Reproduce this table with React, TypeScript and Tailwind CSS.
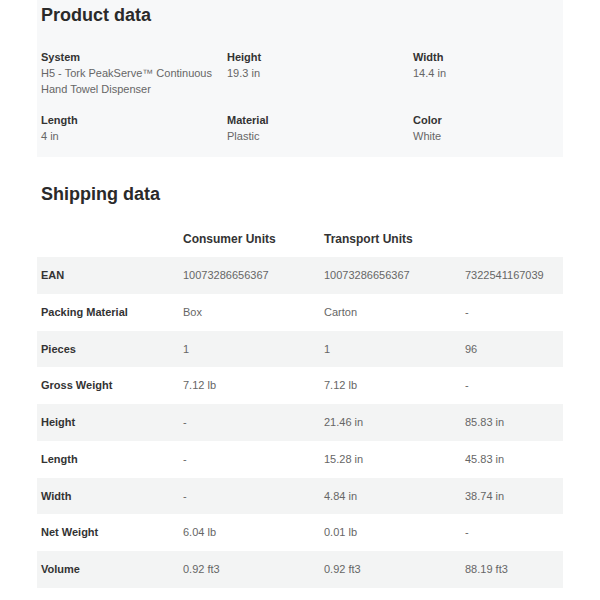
import React from "react";

const product = [
  [
    { label: "System", value: "H5 - Tork PeakServe™ Continuous Hand Towel Dispenser" },
    { label: "Height", value: "19.3 in" },
    { label: "Width", value: "14.4 in" },
  ],
  [
    { label: "Length", value: "4 in" },
    { label: "Material", value: "Plastic" },
    { label: "Color", value: "White" },
  ],
];

const rows: [string, string, string, string][] = [
  ["EAN", "10073286656367", "10073286656367", "7322541167039"],
  ["Packing Material", "Box", "Carton", "-"],
  ["Pieces", "1", "1", "96"],
  ["Gross Weight", "7.12 lb", "7.12 lb", "-"],
  ["Height", "-", "21.46 in", "85.83 in"],
  ["Length", "-", "15.28 in", "45.83 in"],
  ["Width", "-", "4.84 in", "38.74 in"],
  ["Net Weight", "6.04 lb", "0.01 lb", "-"],
  ["Volume", "0.92 ft3", "0.92 ft3", "88.19 ft3"],
];

export default function App() {
  return (
    <div
      className="w-[600px] h-[600px] bg-white overflow-hidden"
      style={{ fontFamily: '"Liberation Sans", Arial, sans-serif' }}
    >
      <div className="mx-[37px] w-[526px]">
        <div className="bg-[#f7f8f9] px-1 pt-[3px] pb-[13px]">
          <h2 className="text-[18px] leading-[24px] font-bold text-[#2a2a2a]">Product data</h2>
          <div className="mt-[22px] flex flex-col gap-[15px]">
            {product.map((r, i) => (
              <div key={i} className="grid grid-cols-[186px_186px_1fr]">
                {r.map((c) => (
                  <div key={c.label}>
                    <div className="text-[11px] leading-[16px] font-bold text-[#333]">{c.label}</div>
                    <div className="text-[11px] leading-[16px] text-[#666] max-w-[178px]">{c.value}</div>
                  </div>
                ))}
              </div>
            ))}
          </div>
        </div>

        <h2 className="mt-[25px] px-1 text-[18px] leading-[24px] font-bold text-[#2a2a2a]">Shipping data</h2>
        <div className="mt-[14px]">
          <div className="grid grid-cols-[142px_141px_141px_1fr] h-[37px] items-center">
            <div />
            <div className="px-1 text-[12px] font-bold text-[#333]">Consumer Units</div>
            <div className="px-1 text-[12px] font-bold text-[#333]">Transport Units</div>
            <div />
          </div>
          {rows.map((r, i) => (
            <div
              key={i}
              className={`grid grid-cols-[142px_141px_141px_1fr] h-[36.75px] items-center ${
                i % 2 === 0 ? "bg-[#f3f4f4]" : "bg-white"
              }`}
            >
              <div className="px-1 text-[11px] font-bold text-[#333]">{r[0]}</div>
              <div className="px-1 text-[11px] text-[#666]">{r[1]}</div>
              <div className="px-1 text-[11px] text-[#666]">{r[2]}</div>
              <div className="px-1 text-[11px] text-[#666]">{r[3]}</div>
            </div>
          ))}
        </div>
      </div>
    </div>
  );
}
